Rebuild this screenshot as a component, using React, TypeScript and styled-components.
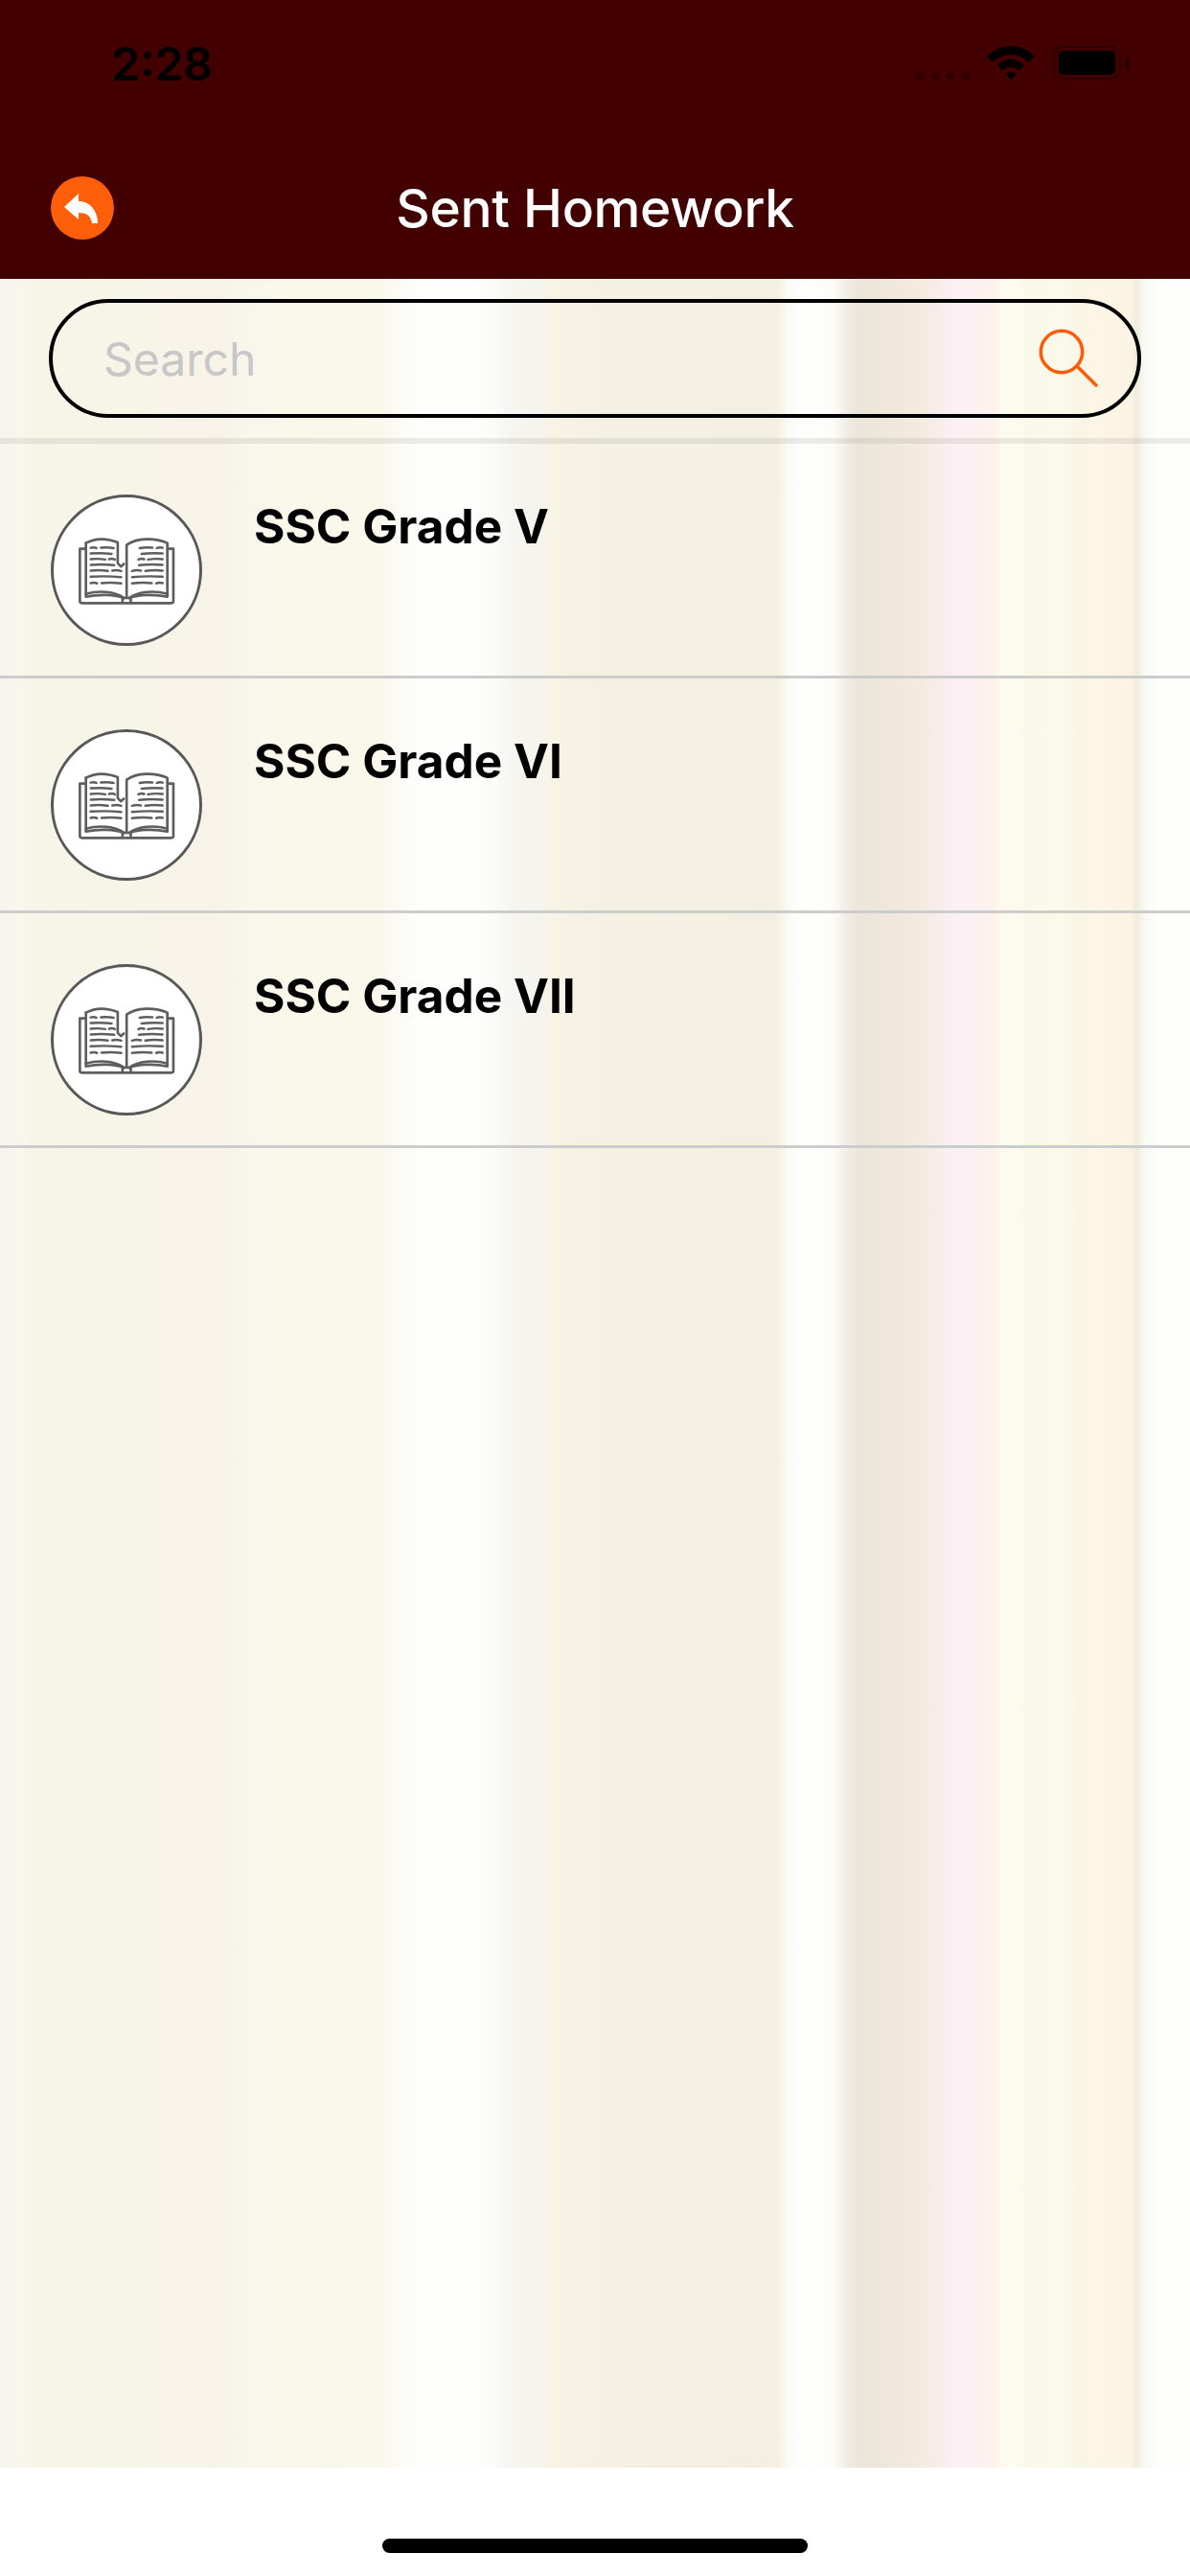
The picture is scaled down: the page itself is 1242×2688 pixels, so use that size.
import styled, { createGlobalStyle } from "styled-components";

const GlobalStyle = createGlobalStyle`
  html, body {
    margin: 0;
    padding: 0;
    background: #fff;
  }
  * {
    box-sizing: border-box;
  }
`;

// vertical streaks of the blurred background image, [x px, colour]
const streaks: [number, string][] = [
  [0, "#f6f4ee"],
  [10, "#f9f5ee"],
  [28, "#f8f6ec"],
  [36, "#f6f4e7"],
  [65, "#f7f4e8"],
  [230, "#f7f3e8"],
  [260, "#f9f6eb"],
  [395, "#faf8ea"],
  [402, "#faf8f0"],
  [420, "#fcfbf6"],
  [440, "#fefefc"],
  [495, "#fefefc"],
  [515, "#fbfbf8"],
  [535, "#f6f5f0"],
  [570, "#f5f3ec"],
  [573, "#f7f3e5"],
  [625, "#f4f1e3"],
  [800, "#f3f0e1"],
  [812, "#f5f0e1"],
  [822, "#fafbf5"],
  [840, "#fefefc"],
  [870, "#fcfcf9"],
  [885, "#f0ece4"],
  [895, "#ece5da"],
  [915, "#ede6da"],
  [960, "#f3ebdf"],
  [975, "#f6edea"],
  [1000, "#fbf0f4"],
  [1030, "#fbf1ef"],
  [1040, "#fdf3ea"],
  [1045, "#fdfbef"],
  [1065, "#fcfbee"],
  [1070, "#f9f9e9"],
  [1110, "#fbf9ea"],
  [1130, "#f8f5e4"],
  [1140, "#fcf6e6"],
  [1180, "#fbf4e5"],
  [1186, "#f0ecdc"],
  [1195, "#f9faf5"],
  [1210, "#fefefc"],
  [1242, "#fefefc"],
];

const streakGradient = streaks.map(([x, c]) => `${c} ${x}px`).join(", ");

const grades = ["SSC Grade V", "SSC Grade VI", "SSC Grade VII"];

// text lines on the left page of the book icon: y, left end, right end
const pageLines: [number, number, number][] = [
  [247, 196, 214],
  [247, 228, 268],
  [265, 196, 262],
  [283, 196, 242],
  [283, 254, 272],
  [301, 196, 270],
  [319, 196, 250],
  [319, 264, 292],
  [338, 196, 292],
  [358, 196, 216],
  [358, 230, 292],
];

const BookIcon = () => (
  <BookSvg viewBox="150 200 320 235">
    <g fill="none" stroke="#5e5e5e" strokeWidth="8" strokeLinecap="round" strokeLinejoin="round">
      <path d="M178 250H162V415q0 6 6 6H450q6 0 6-6V250H440" />
      <path d="M181 232V392C222 380 272 384 301 405H317C346 384 396 380 437 392V232C396 214 340 216 309 238V405" />
      <path d="M181 232C215 214 250 218 281 230V296L291 306 300 298" />
      <path d="M181 392V401C222 392 272 394 301 405M437 392V401C396 392 346 394 317 405" />
      <path d="M296 406V420M322 406V420" />
    </g>
    <g fill="none" stroke="#5e5e5e" strokeWidth="7.500" strokeLinecap="round">
      {pageLines.map(([y, a, b]) => (
        <path key={`l${y}${a}`} d={`M${a} ${y}Q${(a + b) / 2} ${y - 3} ${b} ${y + 1}`} />
      ))}
      {pageLines.map(([y, a, b]) => (
        <path key={`r${y}${a}`} d={`M${618 - b} ${y + 1}Q${618 - (a + b) / 2} ${y - 3} ${618 - a} ${y}`} />
      ))}
    </g>
  </BookSvg>
);

const App = () => {
  return (
    <Page>
      <GlobalStyle />
      <Header>
        <StatusBar>
          <Clock>2:28</Clock>
          <StatusIcons>
            <SignalDots>
              <i />
              <i />
              <i />
              <i />
            </SignalDots>
            <svg width="50" height="36" viewBox="0 0 50 36">
              <path
                fill="#000"
                d="M25 0C34 0 43 4 49.500 11L44 17C39 12 32 9 25 9S11 12 6 17L.5 11C7 4 16 0 25 0ZM25 14C30 14 35 16 39 20L34 25.500C31.500 23 28.500 22 25 22S18.500 23 16 25.500L11 20C15 16 20 14 25 14ZM25 27C27 27 29 27.800 30.500 29L25 35.500 19.500 29C21 27.800 23 27 25 27Z"
              />
            </svg>
            <Battery>
              <BatteryFill />
            </Battery>
          </StatusIcons>
        </StatusBar>
        <NavBar>
          <BackButton>
            <svg width="66" height="66" viewBox="0 0 66 66">
              <path fill="#fff" d="M14 32 29 18V26C41 26 49 36 49 49H43C42 41 37 38 29 38V45Z" />
            </svg>
          </BackButton>
          <Title>Sent Homework</Title>
        </NavBar>
      </Header>

      <Content>
        <SearchSection>
          <SearchBox>
            <Placeholder>Search</Placeholder>
            <svg width="62" height="62" viewBox="0 0 62 62">
              <g fill="none" stroke="#ff5a0a" strokeWidth="3.500" strokeLinecap="round">
                <circle cx="24" cy="24" r="21.700" />
                <path d="M41 40 60 59" />
              </g>
            </svg>
          </SearchBox>
        </SearchSection>
        {grades.map((grade) => (
          <Row key={grade}>
            <BookCircle>
              <BookIcon />
            </BookCircle>
            <RowTitle>{grade}</RowTitle>
          </Row>
        ))}
      </Content>

      <HomeArea>
        <HomeBar />
      </HomeArea>
    </Page>
  );
};

const Page = styled.div`
  width: 1242px;
  height: 2688px;
  display: flex;
  flex-direction: column;
  overflow: hidden;
  font-family: Inter, "Liberation Sans", sans-serif;
`;

const Header = styled.header`
  height: 291px;
  background: #420000;
  display: flex;
  flex-direction: column;
`;

const StatusBar = styled.div`
  height: 184px;
  padding: 38px 72px 0 116px;
  display: flex;
  justify-content: space-between;
  align-items: flex-start;
`;

const Clock = styled.span`
  font-size: 48px;
  line-height: 58px;
  font-weight: 600;
  color: #000;
`;

const StatusIcons = styled.div`
  display: flex;
  align-items: flex-start;
  margin-top: 10px;

  svg {
    margin-left: 18px;
  }
`;

const SignalDots = styled.div`
  display: flex;
  gap: 8px;
  margin-top: 27px;

  i {
    display: block;
    width: 8px;
    height: 8px;
    border-radius: 3px;
    background: #300000;
  }
`;

const Battery = styled.div`
  position: relative;
  width: 71px;
  height: 35px;
  margin-left: 19px;
  padding: 3px 4px;
  border: 2px solid #300000;
  border-radius: 11px;

  &::after {
    content: "";
    position: absolute;
    right: -11px;
    top: 10px;
    width: 4px;
    height: 13px;
    border-radius: 0 4px 4px 0;
    background: #280000;
  }
`;

const BatteryFill = styled.div`
  width: 100%;
  height: 100%;
  border-radius: 5px;
  background: #000;
`;

const NavBar = styled.div`
  display: grid;
  grid-template-columns: 1fr auto 1fr;
  align-items: center;
  padding: 0 53px;
`;

const BackButton = styled.div`
  width: 66px;
  height: 66px;
  border-radius: 50%;
  background: #ff5f0a;
`;

const Title = styled.h1`
  margin: 0;
  font-size: 55px;
  line-height: 66px;
  font-weight: 550;
  letter-spacing: -0.3px;
  color: #fff;
`;

const Content = styled.main`
  flex: 1;
  background: linear-gradient(to right, ${streakGradient});
`;

const SearchSection = styled.div`
  height: 172px;
  padding: 21px 51px;
  border-bottom: 6px solid rgba(120, 120, 110, 0.14);
`;

const SearchBox = styled.div`
  height: 124px;
  padding: 0 41px 0 53px;
  display: flex;
  align-items: center;
  justify-content: space-between;
  border: 4px solid #000;
  border-radius: 62px;
`;

const Placeholder = styled.span`
  font-size: 48px;
  color: #c7c7c7;
`;

const Row = styled.div`
  height: 245px;
  padding: 53px 0 0 53px;
  display: flex;
  align-items: flex-start;
  gap: 54px;
  border-bottom: 3px solid #ccc;
`;

const BookCircle = styled.div`
  width: 158px;
  height: 158px;
  flex-shrink: 0;
  display: flex;
  align-items: center;
  justify-content: center;
  border: 3.5px solid #585858;
  border-radius: 50%;
  background: #fff;
`;

const BookSvg = styled.svg`
  width: 107px;
  height: 78px;
`;

const RowTitle = styled.span`
  margin-top: 3px;
  font-size: 49.5px;
  line-height: 60px;
  font-weight: 700;
  color: #000;
`;

const HomeArea = styled.div`
  height: 113px;
  padding-top: 74px;
  display: flex;
  justify-content: center;
  background: #fff;
`;

const HomeBar = styled.div`
  width: 444px;
  height: 15px;
  border-radius: 8px;
  background: #000;
`;

export default App;
